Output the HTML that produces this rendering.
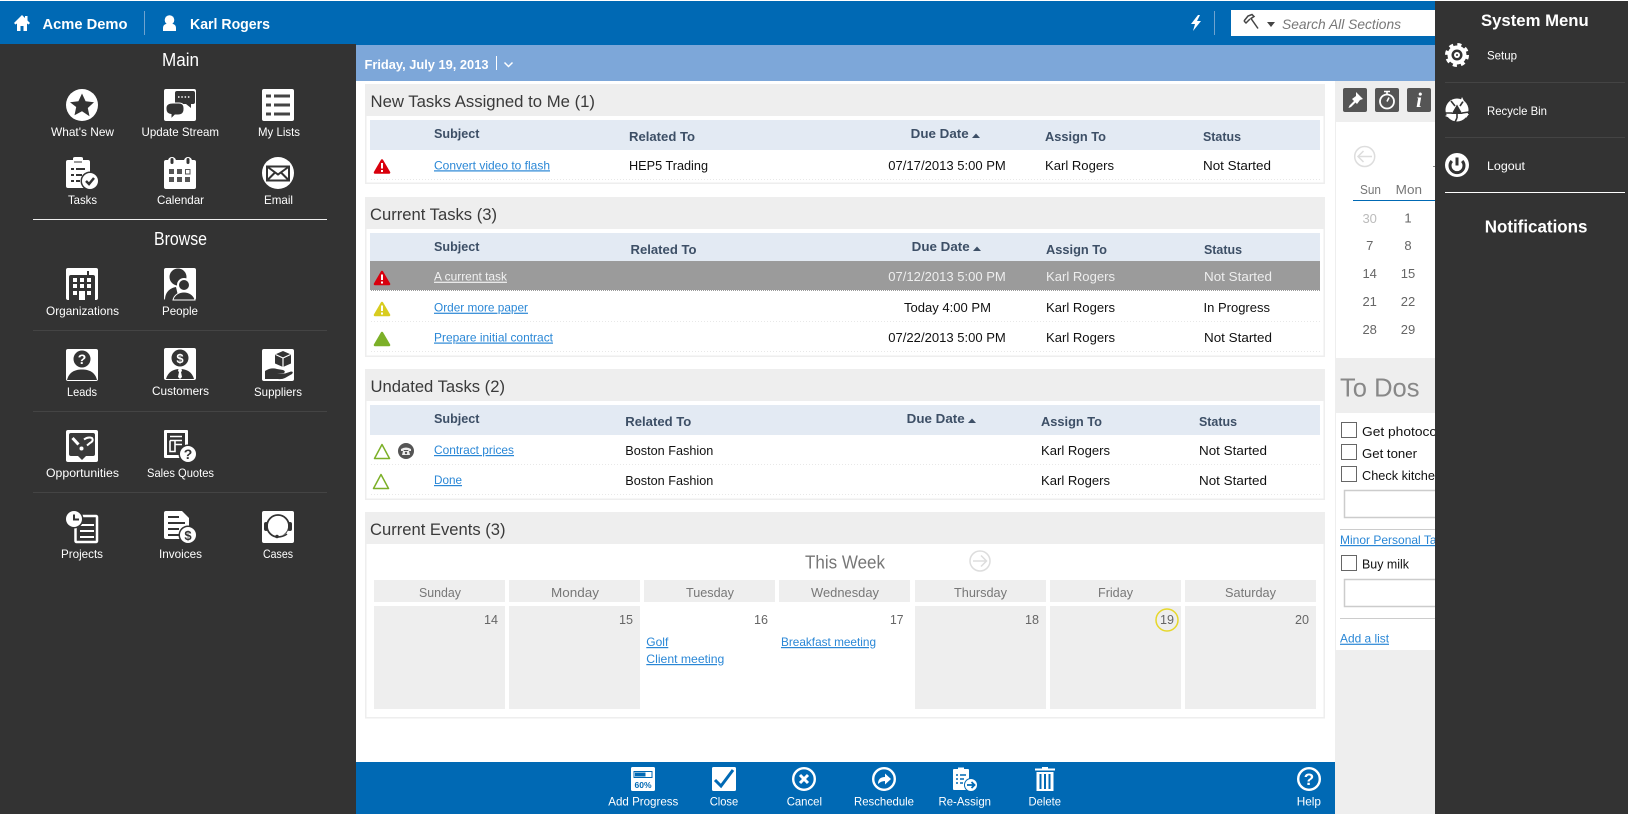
<!DOCTYPE html>
<html lang="en"><head><meta charset="utf-8"><title>Acme Demo - Karl Rogers</title>
<style>
html,body{margin:0;padding:0;background:#fff;overflow:hidden;width:1628px;height:814px}
svg{display:block;font-family:"Liberation Sans",sans-serif}
.s{font-size:12px;fill:#fff}
.h{font-size:18px;fill:#fff}
.b{font-size:15px;font-weight:700;fill:#fff}
.t{font-size:17px;fill:#3a3a3a}
.th{font-size:13px;font-weight:700;fill:#3d4f66}
.td{font-size:13px;fill:#111}
.w{font-size:13px;fill:#eee}
.a{font-size:12px;fill:#2a87d6;text-decoration:underline}
.d{font-size:13px;fill:#777}
.n{font-size:13px;fill:#666}
</style></head><body>
<svg width="1628" height="814" viewBox="0 0 1628 814" xmlns="http://www.w3.org/2000/svg">
<rect width="1628" height="814" fill="#fff"/>
<!-- header -->
<rect y="1" width="1628" height="44" fill="#0069b4"/>
<rect x="356" y="45" width="1079" height="36" fill="#7da7d9"/>
<rect y="44" width="356" height="770" fill="#333"/>
<path d="M22 15L14 23 15.500 24.500 17 23.500V31H20.500V26H23.500V31H27V23.500L28.500 24.500 30 23 27.500 20.500V16H25V18Z" fill="#fff"/>
<text class="b" x="42.500" y="29" textLength="85" lengthAdjust="spacingAndGlyphs">Acme Demo</text>
<rect x="144" y="11" width="1" height="24" fill="#6fa3cf"/>
<circle cx="169.500" cy="20" r="4.800" fill="#fff"/><path d="M163 31v-3q0-4.500 6.500-4.500t6.500 4.500v3z" fill="#fff"/>
<text class="b" x="190" y="29" textLength="80" lengthAdjust="spacingAndGlyphs">Karl Rogers</text>
<path d="M1198 15L1191 24H1195L1193 31 1201 21H1197L1200 15Z" fill="#fff"/>
<rect x="1214" y="11" width="1" height="24" fill="#6fa3cf"/>
<rect x="1231" y="10" width="204" height="26" fill="#fff"/>
<path d="M1244 21l4-5 4-1.500 2 2-3 2 7 10M1244 21l2 2 4-4" fill="none" stroke="#444" stroke-width="1.500"/>
<path d="M1267 22h8l-4 5z" fill="#444"/>
<text x="1282" y="29" font-size="14" font-style="italic" fill="#777" textLength="119" lengthAdjust="spacingAndGlyphs">Search All Sections</text>

<!-- sidebar -->
<text class="h" x="162" y="66" textLength="37" lengthAdjust="spacingAndGlyphs">Main</text>
<g transform="translate(66,89)"><circle cx="16" cy="16" r="16" fill="#fff"/><path d="M16 4.500l3.600 7.800 8.400 1-6.200 5.700 1.700 8.300L16 22.200l-7.500 4.100 1.700-8.300L4 13.300l8.400-1z" fill="#333"/></g>
<text class="s" x="51" y="136" textLength="63" lengthAdjust="spacingAndGlyphs">What's New</text>
<g transform="translate(164,89)"><rect width="32" height="32" rx="2" fill="#fff"/><path d="M13 2h16a2 2 0 0 1 2 2v9a2 2 0 0 1-2 2h-2l0 4-5-4h-9a2 2 0 0 1-2-2v-9a2 2 0 0 1 2-2z" fill="#333"/><path d="M14 8h1.500M17.300 8h1.500M20.600 8h1.500M23.900 8h1.500" stroke="#fff" stroke-width="1.500"/><path d="M9 14h6q5 0 5 5v1q0 6-6 6h-3l-4 4 0-4.500Q2 25 2 20v-1q0-5 7-5z" fill="#333" stroke="#fff" stroke-width="1"/></g>
<text class="s" x="141.500" y="136" textLength="77.500" lengthAdjust="spacingAndGlyphs">Update Stream</text>
<g transform="translate(262,89)"><rect width="32" height="32" rx="2" fill="#fff"/><path d="M4 7h5M12 7h16M4 16h5M12 16h16M4 25h5M12 25h16" stroke="#444" stroke-width="3"/></g>
<text class="s" x="258" y="136" textLength="42" lengthAdjust="spacingAndGlyphs">My Lists</text>

<g transform="translate(66,157)"><path d="M2 3h5V1.500Q7 0 9 0h6q2 0 2 1.500V3h5q2 0 2 2v24q0 2-2 2H2q-2 0-2-2V5q0-2 2-2z" fill="#fff"/><path d="M8 5h8" stroke="#333"/><path d="M5 12h3M10 12h9M5 18h3M10 18h6M5 24h3M10 24h4" stroke="#333" stroke-width="2"/><circle cx="24" cy="24" r="9.500" fill="#333"/><circle cx="24" cy="24" r="8" fill="#fff"/><path d="M20 24l3 3 5-6" fill="none" stroke="#333" stroke-width="2.500"/></g>
<text class="s" x="68" y="204" textLength="29" lengthAdjust="spacingAndGlyphs">Tasks</text>
<g transform="translate(164,157)"><rect y="3" width="32" height="29" rx="2" fill="#fff"/><circle cx="8" cy="4" r="4" fill="#fff"/><circle cx="24" cy="4" r="4" fill="#fff"/><rect x="6.500" y="1" width="3" height="6" rx="1.500" fill="#333"/><rect x="22.500" y="1" width="3" height="6" rx="1.500" fill="#333"/><path d="M5 12h5v5H5zM13 12h5v5h-5zM5 20h5v5H5zM13 20h5v5h-5zM21 20h5v5h-5z" fill="#555"/><rect x="21.500" y="12.500" width="4.500" height="4.500" fill="none" stroke="#555"/></g>
<text class="s" x="157" y="204" textLength="47" lengthAdjust="spacingAndGlyphs">Calendar</text>
<g transform="translate(262,157)"><circle cx="16" cy="16" r="16" fill="#fff"/><path d="M5 9.500h22v14H5zM5 9.500l11 8 11-8M5 23.500l8-8M27 23.500l-8-8" fill="none" stroke="#333" stroke-width="2"/></g>
<text class="s" x="264" y="204" textLength="29" lengthAdjust="spacingAndGlyphs">Email</text>
<rect x="33" y="219" width="294" height="1" fill="#eee"/>
<text class="h" x="154" y="245" textLength="53" lengthAdjust="spacingAndGlyphs">Browse</text>

<g transform="translate(66,268)"><rect width="32" height="32" rx="2" fill="#fff"/><path d="M3 9q0-2 2-2h16V3h2v4h4q2 0 2 2v23H3z" fill="#333"/><path d="M7 10h4v4H7zM14 10h4v4h-4zM21 10h4v4h-4zM7 16h4v4H7zM14 16h4v4h-4zM21 16h4v4h-4zM7 23h4v4H7zM21 23h4v4h-4zM13 23h6v9h-6z" fill="#fff"/></g>
<text class="s" x="46" y="315" textLength="73" lengthAdjust="spacingAndGlyphs">Organizations</text>
<g transform="translate(164,268)"><rect width="32" height="32" rx="2" fill="#fff"/><circle cx="14" cy="9" r="8.500" fill="#333"/><path d="M1 32c0-8 5-12 11-13l3 13z" fill="#333"/><path d="M9 32c1-5 6-8 11-8s10 3 11 8z" fill="#333" stroke="#fff" stroke-width="1"/><circle cx="20" cy="17" r="6" fill="#333" stroke="#fff" stroke-width="2"/></g>
<text class="s" x="162" y="315" textLength="36" lengthAdjust="spacingAndGlyphs">People</text>
<rect x="33" y="330" width="294" height="1" fill="#444"/>

<g transform="translate(66,349)"><rect width="32" height="32" rx="2" fill="#fff"/><circle cx="16" cy="10" r="8.500" fill="#333"/><path d="M1 31C3 23 9 20.500 16 20.500S29 23 31 31z" fill="#333"/><text x="16" y="15" font-size="14" font-weight="700" fill="#fff" text-anchor="middle">?</text></g>
<text class="s" x="67" y="396" textLength="30" lengthAdjust="spacingAndGlyphs">Leads</text>
<g transform="translate(164,348)"><rect width="32" height="32" rx="2" fill="#fff"/><circle cx="16" cy="10" r="8.500" fill="#333"/><path d="M2 31C4 24 9 21 16 21s12 3 14 10z" fill="#333"/><path d="M14.500 21h3l.5 2-1 1 1 5-2 2-2-2 1-5-1-1z" fill="#fff"/><text x="16" y="15" font-size="13" font-weight="700" fill="#fff" text-anchor="middle">$</text></g>
<text class="s" x="152" y="395" textLength="57" lengthAdjust="spacingAndGlyphs">Customers</text>
<g transform="translate(262,349)"><rect width="32" height="32" rx="2" fill="#fff"/><path d="M21 2l8 3.500v9L21 18l-8-3.500v-9z" fill="#333"/><path d="M13.500 5.500L21 9l7.500-3.500M21 9v9" fill="none" stroke="#fff" stroke-width="1.200"/><path d="M3 22q6-4 12-2l6 1q3 1 1 3h-7l8 .5 6-2q3 0 1 2.500l-7 4q-3 1.500-7 1H3z" fill="#333"/></g>
<text class="s" x="254" y="396" textLength="48" lengthAdjust="spacingAndGlyphs">Suppliers</text>
<rect x="33" y="411" width="294" height="1" fill="#444"/>

<g transform="translate(66,430)"><rect width="32" height="32" rx="2" fill="#fff"/><path d="M5 3h22q2 0 2 2v19q0 2-2 2h-7l-4 4-4-4H5q-2 0-2-2V5q0-2 2-2z" fill="#3a3a3a"/><path d="M6.500 8l6 6.500" stroke="#fff" stroke-width="3"/><path d="M18 9.500q4-3 8 -1.500 2 3-2 5l-3 2.500" fill="none" stroke="#fff" stroke-width="2"/><circle cx="15.500" cy="18.500" r="2" fill="#fff"/></g>
<text class="s" x="46" y="477" textLength="73" lengthAdjust="spacingAndGlyphs">Opportunities</text>
<g transform="translate(164,430)"><rect width="24" height="28" rx="1" fill="#fff"/><path d="M3 3h18v22H3z" fill="#333"/><path d="M6 6.500h12M6 10.500h12M6 10.500v11h5v-11M11 14.500h7" fill="none" stroke="#fff" stroke-width="1.600"/><circle cx="24" cy="24" r="9.500" fill="#333"/><circle cx="24" cy="24" r="8" fill="#fff"/><text x="24" y="29" font-size="14" font-weight="700" fill="#333" text-anchor="middle">?</text></g>
<text class="s" x="147" y="477" textLength="67" lengthAdjust="spacingAndGlyphs">Sales Quotes</text>
<rect x="33" y="492" width="294" height="1" fill="#444"/>

<g transform="translate(66,511)"><rect x="9.500" y="5" width="21.500" height="26" rx="1" fill="#333" stroke="#fff" stroke-width="2.500"/><path d="M14 14h14M14 20h14M14 26h14" stroke="#fff" stroke-width="2"/><circle cx="8" cy="8" r="9.500" fill="#333"/><circle cx="8" cy="8" r="8" fill="#fff"/><path d="M8 3.500V8.500H13" fill="none" stroke="#333" stroke-width="2"/></g>
<text class="s" x="61" y="558" textLength="42" lengthAdjust="spacingAndGlyphs">Projects</text>
<g transform="translate(164,511)"><path d="M2 0h16l7 7v21H2q-2 0-2-2V2q0-2 2-2z" fill="#fff"/><path d="M4 6h11M4 12h17M4 18h11M4 24h11" stroke="#333" stroke-width="2"/><circle cx="24" cy="24" r="9.500" fill="#333"/><circle cx="24" cy="24" r="8" fill="#fff"/><text x="24" y="29" font-size="13" font-weight="700" fill="#333" text-anchor="middle">$</text></g>
<text class="s" x="159" y="558" textLength="43" lengthAdjust="spacingAndGlyphs">Invoices</text>
<g transform="translate(262,511)"><rect width="32" height="32" rx="2" fill="#fff"/><circle cx="16" cy="15" r="11" fill="none" stroke="#333" stroke-width="1.800"/><rect x="2" y="11" width="4" height="9" rx="2" fill="#333"/><rect x="26" y="11" width="4" height="9" rx="2" fill="#333"/><path d="M27 20q-2 6-12 6" fill="none" stroke="#fff" stroke-width="2.500"/><path d="M25 23q-4 3-10 3" fill="none" stroke="#333" stroke-width="1.500"/><circle cx="15" cy="25.500" r="1.800" fill="#333"/></g>
<text class="s" x="263" y="558" textLength="30" lengthAdjust="spacingAndGlyphs">Cases</text>

<!-- date bar -->
<text x="364.500" y="69" font-size="12.500" font-weight="700" fill="#fff" textLength="124" lengthAdjust="spacingAndGlyphs">Friday, July 19, 2013</text>
<rect x="496" y="56" width="1" height="14" fill="#fff"/>
<path d="M504.500 62.500l4 4 4-4" fill="none" stroke="#fff" stroke-width="1.500"/>

<!-- panel 1 -->
<rect x="365.750" y="84.750" width="958.500" height="98.500" fill="#fff" stroke="#eee" stroke-width="1.500"/>
<rect x="365" y="84" width="960" height="32" fill="#eee"/>
<text class="t" x="370.500" y="106.800" textLength="224.500" lengthAdjust="spacingAndGlyphs">New Tasks Assigned to Me (1)</text>
<rect x="370" y="120" width="950" height="30" fill="#e3eaf3"/>
<text class="th" x="434" y="138" textLength="45.500" lengthAdjust="spacingAndGlyphs">Subject</text>
<text class="th" x="629" y="141" textLength="66" lengthAdjust="spacingAndGlyphs">Related To</text>
<text class="th" x="910.700" y="138" textLength="58" lengthAdjust="spacingAndGlyphs">Due Date</text>
<path d="M972 138l4-4.500 4 4.500z" fill="#3d4f66"/>
<text class="th" x="1045" y="141" textLength="61" lengthAdjust="spacingAndGlyphs">Assign To</text>
<text class="th" x="1203" y="141" textLength="38" lengthAdjust="spacingAndGlyphs">Status</text>
<path d="M382 160.500L389 172.500H375Z" fill="#d9000d" stroke="#d9000d" stroke-width="2.500" stroke-linejoin="round"/><path d="M382 163v5.500M382 170v2" stroke="#fff" stroke-width="2"/>
<text class="a" x="434" y="169.300" textLength="116" lengthAdjust="spacingAndGlyphs">Convert video to flash</text>
<text class="td" x="629" y="170" textLength="79" lengthAdjust="spacingAndGlyphs">HEP5 Trading</text>
<text class="td" x="888.300" y="170" textLength="117.500" lengthAdjust="spacingAndGlyphs">07/17/2013 5:00 PM</text>
<text class="td" x="1045" y="170" textLength="69" lengthAdjust="spacingAndGlyphs">Karl Rogers</text>
<text class="td" x="1203" y="170" textLength="68" lengthAdjust="spacingAndGlyphs">Not Started</text>
<path d="M371 179.500H1320" stroke="#e8e8e8" stroke-dasharray="1 2"/>

<!-- panel 2 -->
<rect x="365.750" y="197.750" width="958.500" height="158.500" fill="#fff" stroke="#eee" stroke-width="1.500"/>
<rect x="365" y="197" width="960" height="32" fill="#eee"/>
<text class="t" x="370" y="219.800" textLength="127" lengthAdjust="spacingAndGlyphs">Current Tasks (3)</text>
<rect x="370" y="233" width="950" height="28" fill="#e3eaf3"/>
<text class="th" x="434" y="251" textLength="45.500" lengthAdjust="spacingAndGlyphs">Subject</text>
<text class="th" x="630.500" y="254" textLength="66" lengthAdjust="spacingAndGlyphs">Related To</text>
<text class="th" x="911.700" y="251" textLength="58" lengthAdjust="spacingAndGlyphs">Due Date</text>
<path d="M973 251l4-4.500 4 4.500z" fill="#3d4f66"/>
<text class="th" x="1046" y="254" textLength="61" lengthAdjust="spacingAndGlyphs">Assign To</text>
<text class="th" x="1204" y="254" textLength="38" lengthAdjust="spacingAndGlyphs">Status</text>
<rect x="370" y="261" width="950" height="30" fill="#9b9b9b"/>
<path d="M370 290.500H1320" stroke="#fff" stroke-dasharray="1 1"/>
<path d="M382 272L389 284H375Z" fill="#d9000d" stroke="#d9000d" stroke-width="2.500" stroke-linejoin="round"/><path d="M382 274.500v5.500M382 281.500v2" stroke="#fff" stroke-width="2"/>
<text x="434" y="280.700" font-size="12" fill="#f2f2f2" text-decoration="underline" textLength="73" lengthAdjust="spacingAndGlyphs">A current task</text>
<text class="w" x="888.300" y="281" textLength="117.500" lengthAdjust="spacingAndGlyphs">07/12/2013 5:00 PM</text>
<text class="w" x="1046" y="281" textLength="69" lengthAdjust="spacingAndGlyphs">Karl Rogers</text>
<text class="w" x="1204" y="281" textLength="68" lengthAdjust="spacingAndGlyphs">Not Started</text>
<path d="M382 303L389 315H375Z" fill="#d8cc20" stroke="#d8cc20" stroke-width="2.500" stroke-linejoin="round"/><path d="M382 305.500v5.500M382 312.500v2" stroke="#fff" stroke-width="2"/>
<text class="a" x="434" y="311.700" textLength="94" lengthAdjust="spacingAndGlyphs">Order more paper</text>
<text class="td" x="904" y="312" textLength="87" lengthAdjust="spacingAndGlyphs">Today 4:00 PM</text>
<text class="td" x="1046" y="312" textLength="69" lengthAdjust="spacingAndGlyphs">Karl Rogers</text>
<text class="td" x="1203.500" y="312" textLength="66.500" lengthAdjust="spacingAndGlyphs">In Progress</text>
<path d="M371 321.500H1320" stroke="#e8e8e8" stroke-dasharray="1 2"/>
<path d="M382 333L389 345H375Z" fill="#7cb028" stroke="#7cb028" stroke-width="2.500" stroke-linejoin="round"/>
<text class="a" x="434" y="341.500" textLength="119" lengthAdjust="spacingAndGlyphs">Prepare initial contract</text>
<text class="td" x="888.300" y="342" textLength="117.500" lengthAdjust="spacingAndGlyphs">07/22/2013 5:00 PM</text>
<text class="td" x="1046" y="342" textLength="69" lengthAdjust="spacingAndGlyphs">Karl Rogers</text>
<text class="td" x="1204" y="342" textLength="68" lengthAdjust="spacingAndGlyphs">Not Started</text>
<path d="M371 351.500H1320" stroke="#e8e8e8" stroke-dasharray="1 2"/>

<!-- panel 3 -->
<rect x="365.750" y="369.750" width="958.500" height="129.500" fill="#fff" stroke="#eee" stroke-width="1.500"/>
<rect x="365" y="369" width="960" height="32" fill="#eee"/>
<text class="t" x="370.500" y="391.800" textLength="134.500" lengthAdjust="spacingAndGlyphs">Undated Tasks (2)</text>
<rect x="370" y="405" width="950" height="30" fill="#e3eaf3"/>
<text class="th" x="434" y="423" textLength="45.500" lengthAdjust="spacingAndGlyphs">Subject</text>
<text class="th" x="625.300" y="426" textLength="66" lengthAdjust="spacingAndGlyphs">Related To</text>
<text class="th" x="906.700" y="423" textLength="58" lengthAdjust="spacingAndGlyphs">Due Date</text>
<path d="M968 423l4-4.500 4 4.500z" fill="#3d4f66"/>
<text class="th" x="1041" y="426" textLength="61" lengthAdjust="spacingAndGlyphs">Assign To</text>
<text class="th" x="1199" y="426" textLength="38" lengthAdjust="spacingAndGlyphs">Status</text>
<path d="M382 444.500L389.500 458.500H374.500Z" fill="#fff" stroke="#7cb028" stroke-width="1.500" stroke-linejoin="round"/>
<circle cx="406" cy="451" r="8" fill="#555"/><path d="M401 449q5-3 10 0v2h-2.500l-.5-1h-4l-.5 1H401zM403 451h6l1 4h-8z" fill="#eee"/><circle cx="406" cy="453" r="1.200" fill="#555"/>
<text class="a" x="434" y="454" textLength="80" lengthAdjust="spacingAndGlyphs">Contract prices</text>
<text class="td" x="625.300" y="455" textLength="88" lengthAdjust="spacingAndGlyphs">Boston Fashion</text>
<text class="td" x="1041" y="455" textLength="69" lengthAdjust="spacingAndGlyphs">Karl Rogers</text>
<text class="td" x="1199" y="455" textLength="68" lengthAdjust="spacingAndGlyphs">Not Started</text>
<path d="M371 464.500H1320" stroke="#e8e8e8" stroke-dasharray="1 2"/>
<path d="M381 474.500L388.500 488.500H373.500Z" fill="#fff" stroke="#7cb028" stroke-width="1.500" stroke-linejoin="round"/>
<text class="a" x="434" y="484" textLength="28" lengthAdjust="spacingAndGlyphs">Done</text>
<text class="td" x="625.300" y="485" textLength="88" lengthAdjust="spacingAndGlyphs">Boston Fashion</text>
<text class="td" x="1041" y="485" textLength="69" lengthAdjust="spacingAndGlyphs">Karl Rogers</text>
<text class="td" x="1199" y="485" textLength="68" lengthAdjust="spacingAndGlyphs">Not Started</text>
<path d="M371 494.500H1320" stroke="#e8e8e8" stroke-dasharray="1 2"/>

<!-- panel 4 -->
<rect x="365.750" y="512.750" width="958.500" height="205" fill="#fff" stroke="#eee" stroke-width="1.500"/>
<rect x="365" y="512" width="960" height="32" fill="#eee"/>
<text class="t" x="370" y="534.800" textLength="135.500" lengthAdjust="spacingAndGlyphs">Current Events (3)</text>
<text x="805" y="568.300" font-size="18" fill="#777" textLength="80" lengthAdjust="spacingAndGlyphs">This Week</text>
<circle cx="980" cy="561" r="10" fill="none" stroke="#ddd" stroke-width="1.500"/><path d="M973 561h13M981 555.500l5.500 5.500-5.500 5.500" fill="none" stroke="#ddd" stroke-width="1.500"/>
<g fill="#eee">
<rect x="374" y="580" width="131" height="22"/><rect x="509" y="580" width="131" height="22"/><rect x="644" y="580" width="131" height="22"/><rect x="779" y="580" width="131" height="22"/><rect x="915" y="580" width="131" height="22"/><rect x="1050" y="580" width="131" height="22"/><rect x="1185" y="580" width="131" height="22"/>
<rect x="374" y="606" width="131" height="103"/><rect x="509" y="606" width="131" height="103"/><rect x="915" y="606" width="131" height="103"/><rect x="1050" y="606" width="131" height="103"/><rect x="1185" y="606" width="131" height="103"/>
</g>
<text class="d" x="419" y="597" textLength="42" lengthAdjust="spacingAndGlyphs">Sunday</text>
<text class="d" x="551" y="597" textLength="48" lengthAdjust="spacingAndGlyphs">Monday</text>
<text class="d" x="686" y="597" textLength="48" lengthAdjust="spacingAndGlyphs">Tuesday</text>
<text class="d" x="811" y="597" textLength="68" lengthAdjust="spacingAndGlyphs">Wednesday</text>
<text class="d" x="954" y="597" textLength="53" lengthAdjust="spacingAndGlyphs">Thursday</text>
<text class="d" x="1098" y="597" textLength="35" lengthAdjust="spacingAndGlyphs">Friday</text>
<text class="d" x="1225" y="597" textLength="51" lengthAdjust="spacingAndGlyphs">Saturday</text>
<text class="n" x="484" y="624" textLength="14" lengthAdjust="spacingAndGlyphs">14</text>
<text class="n" x="619" y="624" textLength="14" lengthAdjust="spacingAndGlyphs">15</text>
<text class="n" x="754" y="624" textLength="14" lengthAdjust="spacingAndGlyphs">16</text>
<text class="n" x="890" y="624" textLength="13.500" lengthAdjust="spacingAndGlyphs">17</text>
<text class="n" x="1025" y="624" textLength="14" lengthAdjust="spacingAndGlyphs">18</text>
<text class="n" x="1160" y="624" textLength="14" lengthAdjust="spacingAndGlyphs">19</text>
<text class="n" x="1295" y="624" textLength="14" lengthAdjust="spacingAndGlyphs">20</text>
<circle cx="1167" cy="620" r="11" fill="none" stroke="#e6d72a" stroke-width="1.500"/>
<text class="a" x="646.300" y="646" textLength="22" lengthAdjust="spacingAndGlyphs">Golf</text>
<text class="a" x="646.300" y="663" textLength="78" lengthAdjust="spacingAndGlyphs">Client meeting</text>
<text class="a" x="781" y="646" textLength="95" lengthAdjust="spacingAndGlyphs">Breakfast meeting</text>

<!-- bottom bar -->
<rect x="356" y="762" width="979" height="52" fill="#0069b4"/>
<g transform="translate(631,767)"><rect width="24" height="24" rx="1.500" fill="#fff"/><rect x="3" y="4.500" width="18" height="6" fill="none" stroke="#0069b4"/><rect x="4" y="5.500" width="10.500" height="4" fill="#0069b4"/><text x="12" y="21" font-size="8.500" font-weight="700" fill="#0069b4" text-anchor="middle">60%</text></g>
<text class="s" x="608.300" y="805.700" textLength="70" lengthAdjust="spacingAndGlyphs">Add Progress</text>
<g transform="translate(712,767)"><rect width="24" height="24" rx="1.500" fill="#fff"/><path d="M3 13l6 6L21 3" fill="none" stroke="#0069b4" stroke-width="3"/></g>
<text class="s" x="709.700" y="805.700" textLength="28.500" lengthAdjust="spacingAndGlyphs">Close</text>
<g transform="translate(792,767)"><circle cx="12" cy="12" r="10.800" fill="none" stroke="#fff" stroke-width="2.400"/><path d="M8 8l8 8M16 8l-8 8" stroke="#fff" stroke-width="3"/></g>
<text class="s" x="786.700" y="805.700" textLength="35.300" lengthAdjust="spacingAndGlyphs">Cancel</text>
<g transform="translate(872,767)"><circle cx="12" cy="12" r="10.800" fill="none" stroke="#fff" stroke-width="2.400"/><path d="M6 17q0-7 7-7V6.500l6 5.500-6 5.500V14q-4 0-7 3z" fill="#fff"/></g>
<text class="s" x="854" y="805.700" textLength="60" lengthAdjust="spacingAndGlyphs">Reschedule</text>
<g transform="translate(953,767)"><path d="M1 2h4V.5h6V2h4q1 0 1 1v19q0 1-1 1H1q-1 0-1-1V3q0-1 1-1z" fill="#fff"/><path d="M3 8h2M7 8h6M3 12h2M7 12h4M3 16h2M7 16h3" stroke="#0069b4" stroke-width="1.500"/><circle cx="18" cy="18" r="7" fill="#0069b4"/><circle cx="18" cy="18" r="6" fill="#fff"/><path d="M14 18h7M18.500 15l3 3-3 3" fill="none" stroke="#0069b4" stroke-width="1.800"/></g>
<text class="s" x="938.500" y="805.700" textLength="52.500" lengthAdjust="spacingAndGlyphs">Re-Assign</text>
<g transform="translate(1035,767)"><path d="M0 2.500h20M7 1h6" stroke="#fff" stroke-width="2"/><path d="M1.500 5h17v19h-17z" fill="#fff"/><path d="M5.500 7v15M10 7v15M14.500 7v15" stroke="#0069b4" stroke-width="2"/></g>
<text class="s" x="1028.500" y="805.700" textLength="32.500" lengthAdjust="spacingAndGlyphs">Delete</text>
<g transform="translate(1297,767)"><circle cx="12" cy="12" r="10.800" fill="none" stroke="#fff" stroke-width="2.400"/><text x="12" y="18" font-size="17" font-weight="700" fill="#fff" text-anchor="middle">?</text></g>
<text class="s" x="1296.700" y="805.700" textLength="24.300" lengthAdjust="spacingAndGlyphs">Help</text>

<!-- right column -->
<rect x="1335" y="81" width="100" height="733" fill="#eee"/>
<rect x="1336" y="122" width="99" height="236" fill="#fff"/>
<rect x="1336" y="413" width="99" height="237" fill="#fff"/>
<rect x="1343" y="88" width="24" height="24" rx="2" fill="#555"/>
<path d="M1356 92l7 7-3 1-3 4-1.500-1.500L1351 107l-2.500 1 1-2.500 4.500-4.500-2-2 4-3z" fill="#fff"/>
<rect x="1375" y="88" width="24" height="24" rx="2" fill="#555"/>
<circle cx="1387" cy="101.500" r="7" fill="none" stroke="#fff" stroke-width="1.800"/><path d="M1384 91.500h6M1387 92v3M1387 101.500l2-4" stroke="#fff" stroke-width="1.600"/>
<rect x="1407" y="88" width="24" height="24" rx="2" fill="#555"/>
<text x="1419" y="107" font-family="Liberation Serif" font-size="21" font-style="italic" font-weight="700" fill="#fff" text-anchor="middle">i</text>
<circle cx="1364.700" cy="156.500" r="10" fill="none" stroke="#ddd" stroke-width="1.500"/><path d="M1372 156.500h-14M1363.500 151l-5.500 5.500 5.500 5.500" fill="none" stroke="#ddd" stroke-width="1.500"/>
<rect x="1433" y="166" width="2" height="1" fill="#888"/>
<text class="d" x="1360" y="194" textLength="21" lengthAdjust="spacingAndGlyphs">Sun</text>
<text class="d" x="1395.700" y="194" textLength="26.300" lengthAdjust="spacingAndGlyphs">Mon</text>
<rect x="1353" y="200" width="82" height="1" fill="#0069b4"/>
<g class="n" text-anchor="middle" font-size="13">
<text x="1369.700" y="223" fill="#bbb">30</text><text x="1408" y="222.500" fill="#666">1</text>
<text x="1369.700" y="250" fill="#666">7</text><text x="1408" y="250" fill="#666">8</text>
<text x="1369.700" y="278" fill="#666">14</text><text x="1408" y="278" fill="#666">15</text>
<text x="1369.700" y="306" fill="#666">21</text><text x="1408" y="306" fill="#666">22</text>
<text x="1369.700" y="334" fill="#666">28</text><text x="1408" y="334" fill="#666">29</text>
</g>
<text x="1340" y="396.700" font-size="26" fill="#888" textLength="79.500" lengthAdjust="spacingAndGlyphs">To Dos</text>
<g fill="#fff" stroke="#666"><rect x="1341.500" y="422.500" width="15" height="15"/><rect x="1341.500" y="444.500" width="15" height="15"/><rect x="1341.500" y="466.500" width="15" height="15"/><rect x="1341.500" y="555.500" width="15" height="15"/></g>
<text class="td" x="1362" y="436" textLength="98" lengthAdjust="spacingAndGlyphs">Get photocopier</text>
<text class="td" x="1362" y="458" textLength="55" lengthAdjust="spacingAndGlyphs">Get toner</text>
<text class="td" x="1362" y="480" textLength="80" lengthAdjust="spacingAndGlyphs">Check kitchen</text>
<rect x="1344.500" y="490.500" width="110" height="27" fill="#fff" stroke="#ccc" stroke-width="1.500"/>
<rect x="1340" y="529" width="95" height="1" fill="#ccc"/>
<text class="a" x="1340" y="544">Minor Personal Tasks</text>
<text class="td" x="1362" y="568.500" textLength="47" lengthAdjust="spacingAndGlyphs">Buy milk</text>
<rect x="1344.500" y="579.500" width="110" height="27" fill="#fff" stroke="#ccc" stroke-width="1.500"/>
<rect x="1340" y="618" width="95" height="1" fill="#ccc"/>
<text class="a" x="1340" y="642.700" textLength="49" lengthAdjust="spacingAndGlyphs">Add a list</text>

<!-- system menu -->
<rect x="1435" y="1" width="193" height="813" fill="#333"/>
<text x="1481" y="26" font-size="16.500" font-weight="700" fill="#fff" textLength="107.700" lengthAdjust="spacingAndGlyphs">System Menu</text>
<circle cx="1457" cy="55" r="9.500" fill="#fff"/><circle cx="1457" cy="55" r="10.500" fill="none" stroke="#fff" stroke-width="3" stroke-dasharray="4.100 4.150"/><circle cx="1457" cy="55" r="5.500" fill="#333"/><circle cx="1457" cy="55" r="3" fill="#fff"/><circle cx="1457" cy="55" r="1" fill="#333"/>
<text class="s" x="1487" y="59.500" textLength="30" lengthAdjust="spacingAndGlyphs">Setup</text>
<rect x="1445" y="82" width="180" height="1" fill="#444"/>
<circle cx="1457" cy="110" r="11.500" fill="#fff"/>
<path d="M1457 104.500l5.500 9.500h-11z" fill="#333"/>
<path d="M1451 101l4 5M1463 101.500l-3 4.500M1445 113l7 0M1469 112l-7 1M1457 114v4M1455 122l2-4" stroke="#333" stroke-width="1.600" fill="none"/>
<path d="M1462 97l2 4-4 1zM1445 116l4-2 1 4zM1466 118l-1-4 4 0z" fill="#fff"/>
<text class="s" x="1487" y="115" textLength="60" lengthAdjust="spacingAndGlyphs">Recycle Bin</text>
<rect x="1445" y="137" width="180" height="1" fill="#444"/>
<circle cx="1457" cy="165" r="12" fill="#fff"/><path d="M1451.800 161a7 7 0 1 0 10.400 0" fill="none" stroke="#333" stroke-width="3"/><path d="M1457 157.500v8" stroke="#333" stroke-width="3"/>
<text class="s" x="1487" y="170" textLength="38" lengthAdjust="spacingAndGlyphs">Logout</text>
<rect x="1445" y="192" width="180" height="1" fill="#fff"/>
<text x="1484.700" y="232.500" font-size="17.500" font-weight="700" fill="#fff" textLength="102.800" lengthAdjust="spacingAndGlyphs">Notifications</text>
</svg>
</body></html>
